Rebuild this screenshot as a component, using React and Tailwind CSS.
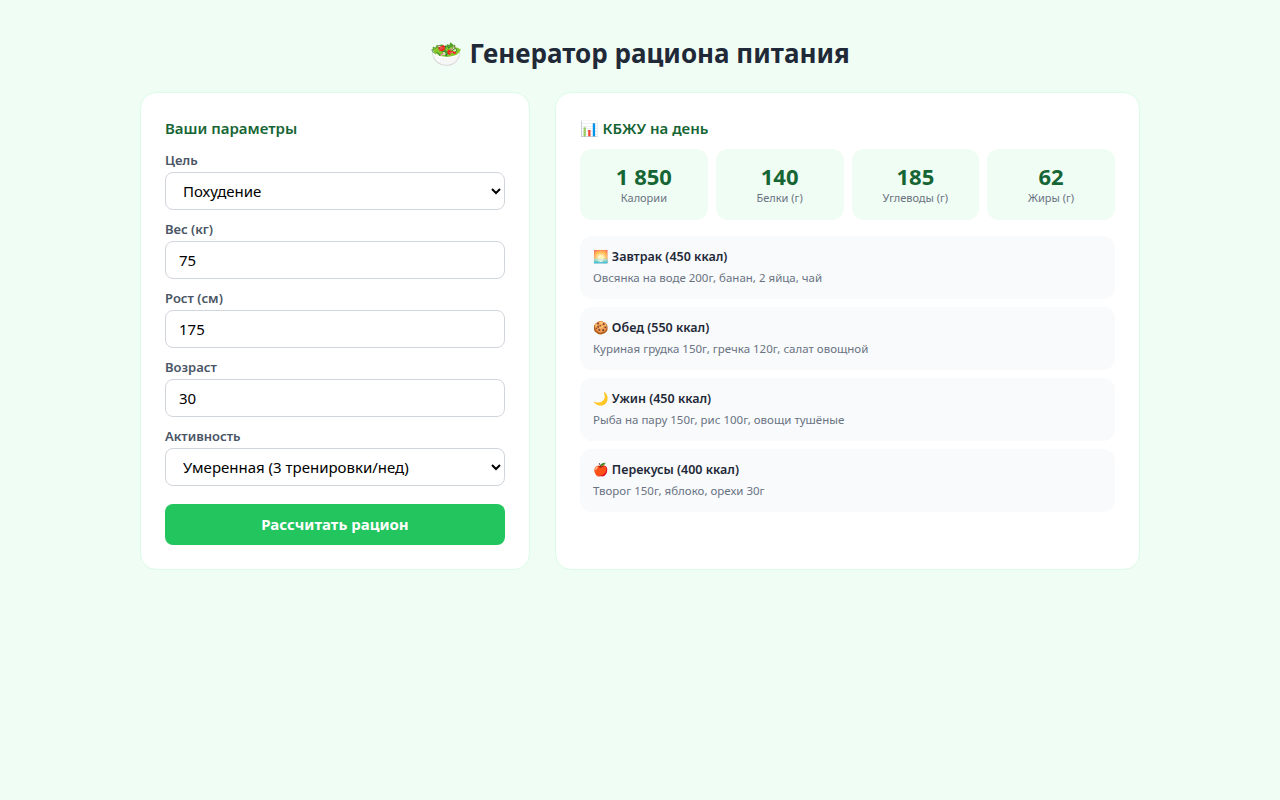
export default function App() {
  const stats = [["1 850","Калории"],["140","Белки (г)"],["185","Углеводы (г)"],["62","Жиры (г)"]];
  const meals = [["🌅","Завтрак (450 ккал)","Овсянка на воде 200г, банан, 2 яйца, чай"],["🍪","Обед (550 ккал)","Куриная грудка 150г, гречка 120г, салат овощной"],["🌙","Ужин (450 ккал)","Рыба на пару 150г, рис 100г, овощи тушёные"],["🍎","Перекусы (400 ккал)","Творог 150г, яблоко, орехи 30г"]];
  const inp = "w-full h-[38px] border border-gray-300 rounded-lg px-[13px] text-[15px] text-black bg-white font-['Liberation_Sans']";
  const lab = "block text-[13px] font-semibold text-gray-600 mb-[3px] leading-[18px]";
  return (
    <div className="min-h-[800px] bg-[#f0fdf4] font-['Noto_Sans',sans-serif] pt-[34px]">
      <h1 className="text-center text-[26px] font-bold text-[#1f2937] mb-[20px] leading-[38px]">🥗 Генератор рациона питания</h1>
      <div className="mx-auto w-[1000px] grid grid-cols-[2fr_3fr] gap-[25px] items-stretch">
        <div className="bg-white rounded-2xl border border-green-100 px-[24px] pt-[24px] pb-[24px]">
          <h2 className="text-[15px] font-semibold text-[#166534] mb-[12px] leading-[22px]">Ваши параметры</h2>
          <div className="flex flex-col gap-[10px]">
            <div><label className={lab}>Цель</label><select className={inp} defaultValue="a"><option value="a">Похудение</option></select></div>
            <div><label className={lab}>Вес (кг)</label><input className={inp} defaultValue="75"/></div>
            <div><label className={lab}>Рост (см)</label><input className={inp} defaultValue="175"/></div>
            <div><label className={lab}>Возраст</label><input className={inp} defaultValue="30"/></div>
            <div><label className={lab}>Активность</label><select className={inp} defaultValue="a"><option value="a">Умеренная (3 тренировки/нед)</option></select></div>
          </div>
          <button className="mt-[18px] w-full h-[41px] rounded-lg bg-[#22c55e] text-white font-bold text-[15px] font-['Liberation_Sans']">Рассчитать рацион</button>
        </div>
        <div className="bg-white rounded-2xl border border-green-100 px-[24px] pt-[24px]">
          <h2 className="text-[15px] font-semibold text-[#166534] mb-[10px] leading-[22px]">📊 КБЖУ на день</h2>
          <div className="grid grid-cols-4 gap-[8px] mb-[16px]">
            {stats.map(([v,l])=>(
              <div key={l} className="bg-[#f0fdf4] rounded-xl h-[71px] flex flex-col items-center justify-center">
                <div className="text-[22px] font-bold text-[#166534] leading-[28px]">{v}</div>
                <div className="text-[11px] text-gray-500">{l}</div>
              </div>))}
          </div>
          <div className="flex flex-col gap-[8px]">
            {meals.map(([e,t,d])=>(
              <div key={t} className="bg-[#f8fafc] rounded-xl h-[63px] px-[13px] pt-[12px]">
                <div className="text-[12.5px] font-semibold text-[#1f2937] leading-[18px]">{e} {t}</div>
                <div className="text-[11.5px] text-gray-500 mt-[3px]">{d}</div>
              </div>))}
          </div>
        </div>
      </div>
    </div>
  );
}
